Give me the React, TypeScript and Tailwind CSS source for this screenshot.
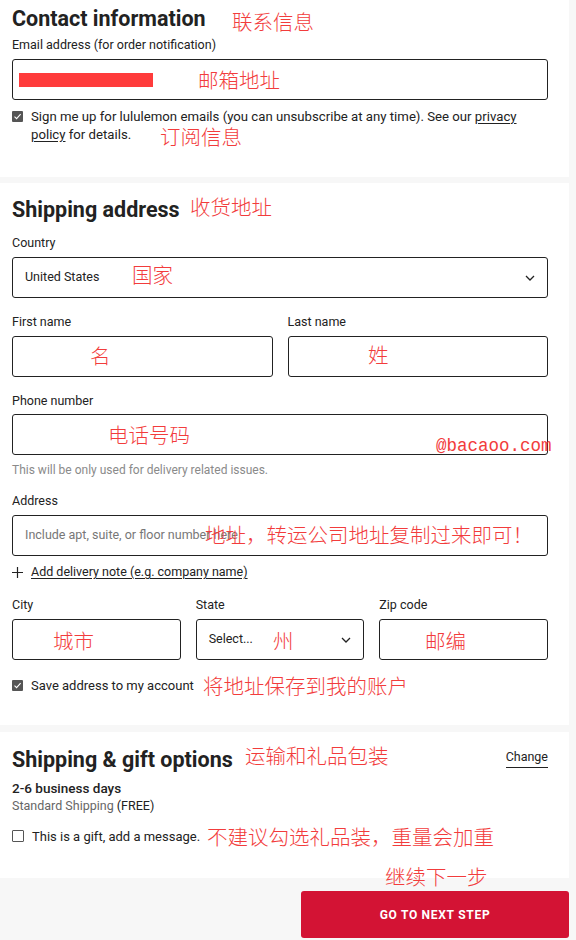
import React from "react";

const Check = ({ checked }: { checked: boolean }) =>
  checked ? (
    <span className="mt-[3px] flex h-[11px] w-[11px] shrink-0 items-center justify-center rounded-[1px] bg-[#555]">
      <svg width="9" height="9" viewBox="0 0 9 9" fill="none">
        <path d="M1.5 4.6L3.6 6.6L7.6 2.2" stroke="#fff" strokeWidth="1.1" />
      </svg>
    </span>
  ) : (
    <span className="mt-[2px] h-[12px] w-[12px] shrink-0 rounded-[1px] border border-[#555] bg-white" />
  );

const Chevron = () => (
  <svg width="10" height="6" viewBox="0 0 10 6" fill="none">
    <path d="M1 1L5 5L9 1" stroke="#222" strokeWidth="1.3" />
  </svg>
);

const Label = ({ children }: { children: React.ReactNode }) => (
  <div className="text-[12.5px] leading-[16px] text-[#222]">{children}</div>
);

const Box = ({ children, className = "" }: { children?: React.ReactNode; className?: string }) => (
  <div className={"flex h-[41px] items-center rounded-[3px] border border-[#222] bg-white px-3 text-[12.5px] " + className}>
    {children}
  </div>
);

const Note = ({ children, className }: { children: React.ReactNode; className: string }) => (
  <span className={"absolute whitespace-nowrap text-[20.5px] leading-[24px] font-light text-[#f23c3c] " + className}>
    {children}
  </span>
);

export default function App() {
  return (
    <div
      className="relative min-h-[940px] w-[576px] bg-[#f7f7f7] text-[#222]"
      style={{ fontFamily: "Roboto, 'Noto Sans CJK SC', sans-serif" }}
    >
      {/* Contact */}
      <section className="mr-[7px] h-[177px] bg-white pl-3 pr-[21px] pt-[5px]">
        <h2 className="text-[21.5px] font-bold leading-[28px]">Contact information</h2>
        <div className="mt-[4px]">
          <Label>Email address (for order notification)</Label>
        </div>
        <Box className="mt-[6px] px-[6px]">
          <span className="h-[14px] w-[134px] bg-[#ff3b3b]" />
        </Box>
        <div className="mt-[8px] flex gap-[8px] text-[13.2px] leading-[18px]">
          <Check checked />
          <p className="max-w-[490px]">
            Sign me up for lululemon emails (you can unsubscribe at any time). See our{" "}
            <span className="underline underline-offset-2">privacy policy</span> for details.
          </p>
        </div>
      </section>

      {/* Shipping address */}
      <section className="mr-[7px] mt-[6px] h-[542px] bg-white pl-3 pr-[21px] pt-[13px]">
        <h2 className="text-[21.5px] font-bold leading-[28px]">Shipping address</h2>
        <div className="mt-[11px]">
          <Label>Country</Label>
        </div>
        <Box className="mt-[6px] justify-between">
          <span>United States</span>
          <Chevron />
        </Box>

        <div className="mt-[16px] grid grid-cols-2 gap-[15px]">
          <div>
            <Label>First name</Label>
            <Box className="mt-[6px]" />
          </div>
          <div>
            <Label>Last name</Label>
            <Box className="mt-[6px]" />
          </div>
        </div>

        <div className="mt-[16px]">
          <Label>Phone number</Label>
        </div>
        <Box className="mt-[5px]" />
        <p className="mt-[7px] text-[12px] leading-[16px] text-[#8a8a8a]">This will be only used for delivery related issues.</p>

        <div className="mt-[15px]">
          <Label>Address</Label>
        </div>
        <Box className="mt-[6px] text-[#777]">Include apt, suite, or floor number here</Box>
        <div className="mt-[8px] flex items-center gap-[8px] text-[12.5px] leading-[16px]">
          <svg width="11" height="11" viewBox="0 0 11 11" fill="none">
            <path d="M5.5 0V11M0 5.5H11" stroke="#222" strokeWidth="1.2" />
          </svg>
          <span className="underline underline-offset-2">Add delivery note (e.g. company name)</span>
        </div>

        <div className="mt-[17px] grid grid-cols-3 gap-[15px]">
          <div>
            <Label>City</Label>
            <Box className="mt-[6px]" />
          </div>
          <div>
            <Label>State</Label>
            <Box className="mt-[6px] justify-between">
              <span>Select...</span>
              <Chevron />
            </Box>
          </div>
          <div>
            <Label>Zip code</Label>
            <Box className="mt-[6px]" />
          </div>
        </div>

        <div className="mt-[17px] flex gap-[8px] text-[13px] leading-[18px]">
          <Check checked />
          <span>Save address to my account</span>
        </div>
      </section>

      {/* Shipping & gift */}
      <section className="mr-[7px] mt-[7px] h-[146px] bg-white pl-3 pr-[21px] pt-[14px]">
        <div className="flex items-start justify-between">
          <h2 className="text-[21.5px] font-bold leading-[28px]">Shipping &amp; gift options</h2>
          <span className="mt-[3px] border-b border-[#222] pb-[2px] text-[12.5px] leading-[16px]">Change</span>
        </div>
        <p className="mt-[5px] text-[13.5px] font-medium leading-[18px]">2-6 business days</p>
        <p className="text-[12.5px] leading-[18px] text-[#666]">
          Standard Shipping <span className="text-[#222]">(FREE)</span>
        </p>
        <div className="mt-[13px] flex gap-[8px] text-[13px] leading-[18px]">
          <Check checked={false} />
          <span>This is a gift, add a message.</span>
        </div>
      </section>

      <div className="mr-[7px] mt-[13px] flex justify-end">
        <button className="h-[47px] w-[268px] rounded-[3px] bg-[#d31334] text-[12px] font-bold tracking-[0.06em] text-white">
          GO TO NEXT STEP
        </button>
      </div>

      {/* annotations */}
      <Note className="left-[232px] top-[11px]">联系信息</Note>
      <Note className="left-[198px] top-[69px]">邮箱地址</Note>
      <Note className="left-[160px] top-[126px]">订阅信息</Note>
      <Note className="left-[190px] top-[196px]">收货地址</Note>
      <Note className="left-[132px] top-[264px]">国家</Note>
      <Note className="left-[90px] top-[345px]">名</Note>
      <Note className="left-[368px] top-[344px]">姓</Note>
      <Note className="left-[108px] top-[424px]">电话号码</Note>
      <span
        className="absolute left-[436px] top-[435px] whitespace-nowrap text-[17.5px] leading-[22px] text-[#f23c3c]"
        style={{ fontFamily: "'Liberation Mono', monospace" }}
      >
        @bacaoo.com
      </span>
      <Note className="left-[205px] top-[524px]">地址，转运公司地址复制过来即可！</Note>
      <Note className="left-[53px] top-[630px]">城市</Note>
      <Note className="left-[273px] top-[630px]">州</Note>
      <Note className="left-[425px] top-[630px]">邮编</Note>
      <Note className="left-[203px] top-[675px]">将地址保存到我的账户</Note>
      <Note className="left-[245px] top-[745px]">运输和礼品包装</Note>
      <Note className="left-[207px] top-[826px]">不建议勾选礼品装，重量会加重</Note>
      <Note className="left-[385px] top-[866px]">继续下一步</Note>
    </div>
  );
}
